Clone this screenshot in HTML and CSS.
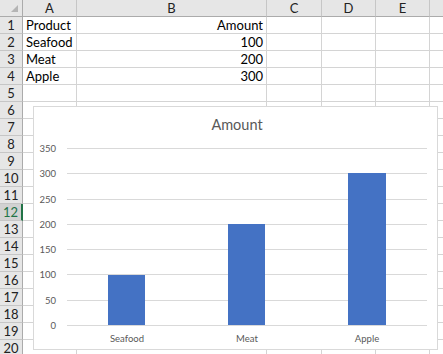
FILE: index.html
```html
<!DOCTYPE html>
<html lang="en">
<head>
	<meta charset="UTF-8">
	<title>Sheet1</title>
<link rel="stylesheet" href="styles.css">
</head>

<body>
<div class="sheet">
	<div class="grid">
		<div class="hd corner">
			<svg width="8" height="8" viewBox="0 0 8 8"><polygon points="7,0 7,7 0,7" fill="#b4b4b4"/></svg>
		</div>
		<div class="hd col">A</div>
		<div class="hd col">B</div>
		<div class="hd col">C</div>
		<div class="hd col">D</div>
		<div class="hd col">E</div>
		<div class="hd col"></div>

		<div class="hd row">1</div><div class="c">Product</div><div class="c num">Amount</div><div class="c"></div><div class="c"></div><div class="c"></div><div class="c"></div>
		<div class="hd row">2</div><div class="c">Seafood</div><div class="c num">100</div><div class="c"></div><div class="c"></div><div class="c"></div><div class="c"></div>
		<div class="hd row">3</div><div class="c">Meat</div><div class="c num">200</div><div class="c"></div><div class="c"></div><div class="c"></div><div class="c"></div>
		<div class="hd row">4</div><div class="c">Apple</div><div class="c num">300</div><div class="c"></div><div class="c"></div><div class="c"></div><div class="c"></div>
		<div class="hd row">5</div><div class="c"></div><div class="c"></div><div class="c"></div><div class="c"></div><div class="c"></div><div class="c"></div>
		<div class="hd row">6</div><div class="c"></div><div class="c"></div><div class="c"></div><div class="c"></div><div class="c"></div><div class="c"></div>
		<div class="hd row">7</div><div class="c"></div><div class="c"></div><div class="c"></div><div class="c"></div><div class="c"></div><div class="c"></div>
		<div class="hd row">8</div><div class="c"></div><div class="c"></div><div class="c"></div><div class="c"></div><div class="c"></div><div class="c"></div>
		<div class="hd row">9</div><div class="c"></div><div class="c"></div><div class="c"></div><div class="c"></div><div class="c"></div><div class="c"></div>
		<div class="hd row">10</div><div class="c"></div><div class="c"></div><div class="c"></div><div class="c"></div><div class="c"></div><div class="c"></div>
		<div class="hd row">11</div><div class="c"></div><div class="c"></div><div class="c"></div><div class="c"></div><div class="c"></div><div class="c"></div>
		<div class="hd row sel">12</div><div class="c"></div><div class="c"></div><div class="c"></div><div class="c"></div><div class="c"></div><div class="c"></div>
		<div class="hd row">13</div><div class="c"></div><div class="c"></div><div class="c"></div><div class="c"></div><div class="c"></div><div class="c"></div>
		<div class="hd row">14</div><div class="c"></div><div class="c"></div><div class="c"></div><div class="c"></div><div class="c"></div><div class="c"></div>
		<div class="hd row">15</div><div class="c"></div><div class="c"></div><div class="c"></div><div class="c"></div><div class="c"></div><div class="c"></div>
		<div class="hd row">16</div><div class="c"></div><div class="c"></div><div class="c"></div><div class="c"></div><div class="c"></div><div class="c"></div>
		<div class="hd row">17</div><div class="c"></div><div class="c"></div><div class="c"></div><div class="c"></div><div class="c"></div><div class="c"></div>
		<div class="hd row">18</div><div class="c"></div><div class="c"></div><div class="c"></div><div class="c"></div><div class="c"></div><div class="c"></div>
		<div class="hd row">19</div><div class="c"></div><div class="c"></div><div class="c"></div><div class="c"></div><div class="c"></div><div class="c"></div>
		<div class="hd row">20</div><div class="c"></div><div class="c"></div><div class="c"></div><div class="c"></div><div class="c"></div><div class="c"></div>
	</div>

	<div class="chart">
		<svg width="403" height="242" viewBox="0 0 403 242">
			<text class="title" x="203" y="23" text-anchor="middle">Amount</text>
			<g class="gl">
				<line x1="33" y1="41.5" x2="393" y2="41.5"/>
				<line x1="33" y1="66.5" x2="393" y2="66.5"/>
				<line x1="33" y1="92.5" x2="393" y2="92.5"/>
				<line x1="33" y1="117.5" x2="393" y2="117.5"/>
				<line x1="33" y1="142.5" x2="393" y2="142.5"/>
				<line x1="33" y1="167.5" x2="393" y2="167.5"/>
				<line x1="33" y1="193.5" x2="393" y2="193.5"/>
				<line x1="33" y1="218.5" x2="393" y2="218.5"/>
			</g>
			<g class="ax" text-anchor="end">
				<text x="22" y="44.5">350</text>
				<text x="22" y="69.5">300</text>
				<text x="22" y="95.5">250</text>
				<text x="22" y="120.5">200</text>
				<text x="22" y="145.5">150</text>
				<text x="22" y="170.5">100</text>
				<text x="22" y="196.5">50</text>
				<text x="22" y="221.5">0</text>
			</g>
			<g fill="#4472c4">
				<rect x="74" y="168" width="37" height="50"/>
				<rect x="194" y="117" width="37" height="101"/>
				<rect x="314" y="66" width="38" height="152"/>
			</g>
			<g class="ax" text-anchor="middle">
				<text x="93" y="235">Seafood</text>
				<text x="213" y="235">Meat</text>
				<text x="333" y="235">Apple</text>
			</g>
		</svg>
	</div>
</div>
</body>
</html>
```

FILE: styles.css
```css
* { margin:0; padding:0; box-sizing:border-box;}
body { background:#fff; overflow:hidden; font-family:Lato, "Liberation Sans", sans-serif;}

.sheet { position:relative; width:443px; height:354px; overflow:hidden;}

.grid { display:grid; grid-template-columns:23px 54px 190px 55px 54px 54px 60px; grid-auto-rows:17px;}
.grid > div { border-right:1px solid #d4d4d4; border-bottom:1px solid #d4d4d4; font-size:13px; line-height:16px; color:#000; white-space:nowrap; overflow:hidden;}

.grid .hd { background:#e6e6e6; color:#222; text-align:center; border-color:#c6c6c6;}
.grid .col { border-bottom-color:#ababab;}
.grid .row { border-right-color:#ababab;}
.grid .corner { border-bottom-color:#ababab; border-right-color:#ababab; display:flex; align-items:flex-end; justify-content:flex-end; padding:0 3px 3px 0;}
.grid .corner svg { display:block;}
.grid .sel { background:#d2d2d2; color:#217346; border-right:2px solid #217346;}

.grid .c { padding:0 3px; line-height:17px;}
.grid .num { text-align:right;}

.chart { position:absolute; left:33px; top:106px; width:405px; height:244px; background:#fff; border:1px solid #d9d9d9;}
.chart svg { display:block;}
.chart .title { font-size:14.5px; fill:#595959;}
.chart .gl line { stroke:#d9d9d9; stroke-width:1;}
.chart .ax { font-size:9.5px; fill:#595959;}
```
